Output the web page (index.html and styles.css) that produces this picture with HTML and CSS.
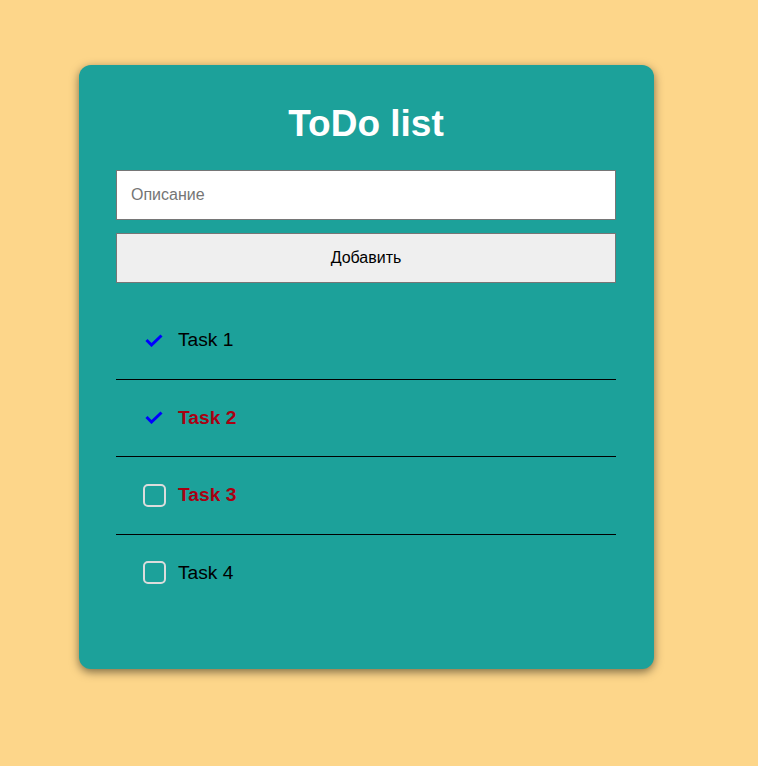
FILE: index.html
```html
<!DOCTYPE html>
<html lang="ru">
<head>
<meta charset="utf-8">
<title>ToDo list</title>
<link rel="stylesheet" href="styles.css">
</head>
<body>
<div class="card">
  <h1 class="title">ToDo list</h1>
  <input class="desc" type="text" placeholder="Описание">
  <button class="add">Добавить</button>
  <ul class="list">
    <li class="item">
      <span class="mark"><svg width="18" height="13" viewBox="0 0 18 13"><polyline points="1.5,6 6.5,11 16.5,1.5" fill="none" stroke="#0000ff" stroke-width="3"/></svg></span>
      <span class="text">Task 1</span>
    </li>
    <li class="item">
      <span class="mark"><svg width="18" height="13" viewBox="0 0 18 13"><polyline points="1.5,6 6.5,11 16.5,1.5" fill="none" stroke="#0000ff" stroke-width="3"/></svg></span>
      <span class="text important">Task 2</span>
    </li>
    <li class="item">
      <span class="mark"><span class="box"></span></span>
      <span class="text important">Task 3</span>
    </li>
    <li class="item">
      <span class="mark"><span class="box"></span></span>
      <span class="text">Task 4</span>
    </li>
  </ul>
</div>
</body>
</html>
```
FILE: styles.css
```css
html, body {
  margin: 0;
  padding: 0;
}
body {
  background: #fdd68a;
  font-family: "Liberation Sans", Arial, sans-serif;
  min-height: 766px;
}
.card {
  box-sizing: border-box;
  width: 575px;
  margin: 65px 0 0 79px;
  padding: 38px 38px 58px 37px;
  background: #1ca19a;
  border-radius: 12px;
  box-shadow: 0 3px 10px rgba(0, 0, 0, 0.5);
  display: flex;
  flex-direction: column;
}
.title {
  margin: 0 0 25px;
  font-size: 37px;
  line-height: 42px;
  font-weight: bold;
  color: #fff;
  text-align: center;
}
.desc {
  box-sizing: border-box;
  width: 500px;
  height: 50px;
  margin: 0;
  padding: 0 14px;
  border: 1px solid #767676;
  background: #fff;
  font-family: "Liberation Sans", Arial, sans-serif;
  font-size: 16px;
  color: #000;
  outline: none;
}
.desc::placeholder {
  color: #757575;
}
.add {
  box-sizing: border-box;
  width: 500px;
  height: 50px;
  margin: 13px 0 0;
  border: 1px solid #767676;
  background: #efefef;
  font-family: "Liberation Sans", Arial, sans-serif;
  font-size: 16px;
  color: #000;
}
.list {
  list-style: none;
  margin: 19px 0 0;
  padding: 0;
  width: 500px;
}
.item {
  height: 76.5px;
  display: flex;
  align-items: center;
  border-bottom: 1px solid #000;
}
.item:last-child {
  border-bottom: none;
}
.mark {
  width: 24px;
  margin-left: 27px;
  margin-right: 11px;
  display: flex;
  align-items: center;
  justify-content: flex-start;
}
.mark svg {
  display: block;
  margin-left: 2px;
}
.box {
  box-sizing: border-box;
  width: 23px;
  height: 23px;
  border: 2px solid #dcdcdc;
  border-radius: 5px;
}
.text {
  font-size: 19.2px;
  color: #000;
}
.text.important {
  color: #a90012;
  font-weight: bold;
}
```
